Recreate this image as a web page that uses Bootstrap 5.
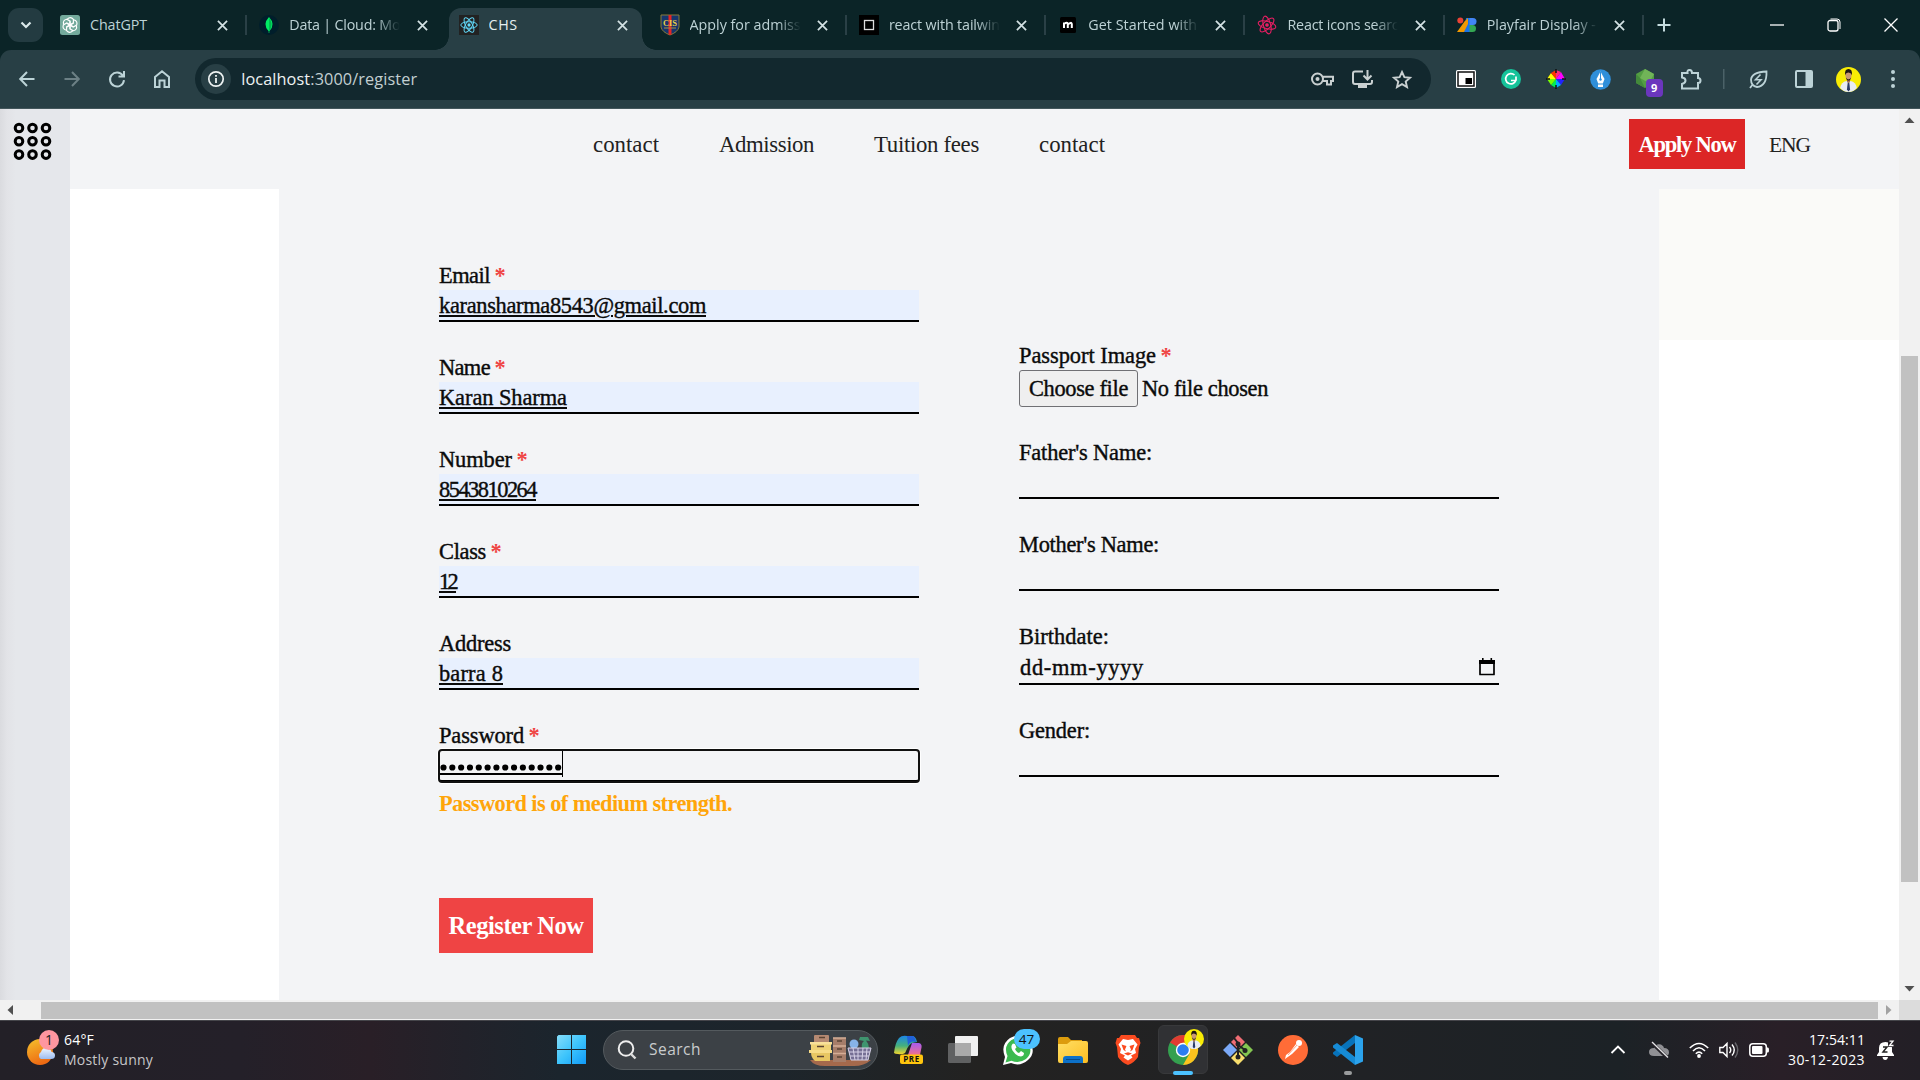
<!DOCTYPE html>
<html lang="en">
<head>
<meta charset="utf-8">
<title>CHS</title>
<link href="https://cdn.jsdelivr.net/npm/bootstrap@5.3.0/dist/css/bootstrap.min.css" rel="stylesheet">
<style>
body{width:1920px;height:1080px;overflow:hidden;font-family:"Open Sans","Noto Sans",sans-serif;background:#f3f4f6}
svg{display:block;flex:none;overflow:visible}
[data-w]{display:inline-block;white-space:nowrap}
/* browser chrome */
.tabstrip{height:50px;background:#0b2427;padding-left:8px}
.tab-search{width:35px;height:34px;border-radius:11px;background:#233b41;margin-right:7px}
.btab{width:199.3px;height:42px;margin-top:8px;padding:0 21px 0 10px;color:#bdd2d5;font-size:14.3px;position:relative}
.btab svg.fav{width:20px;height:20px}
.btab .ttl{width:112px;margin-left:10px;overflow:hidden;white-space:nowrap;line-height:34px;height:34px}
.btab .fade-end{-webkit-mask-image:linear-gradient(90deg,#000 78%,transparent 99%);mask-image:linear-gradient(90deg,#000 78%,transparent 99%)}
.btab .row-in{height:34px}
.btab.sep::after{content:"";position:absolute;right:2px;top:7px;width:2px;height:20px;background:#2a4046}
.btab.on{width:193px;padding-right:14px;background:#283f45;border-radius:12px 12px 0 0;color:#e6eff0}
.btab.after-on{margin-left:8px}
.btab.on::before,.btab.on .curve{content:"";position:absolute;bottom:0;width:14px;height:14px}
.btab.on::before{left:-14px;background:radial-gradient(circle at 0 0,transparent 13.5px,#283f45 14px)}
.btab.on .curve{right:-14px;background:radial-gradient(circle at 100% 0,transparent 13.5px,#283f45 14px)}
.plus{margin:-1px 0 0 11px}
.winctl{margin-right:1px}
.winctl>div{width:57px;height:42px}
.toolbar-bg{height:59px;background:#0b2427}
.tools{height:59px;background:#283f45;border-radius:11px 11px 0 0;border-bottom:1px solid #43565b;padding-left:5px}
.slot{width:44.8px;height:44px;display:flex;align-items:center;justify-content:center;flex:none;position:relative}
.slot-sm{width:40px}
.slot-bar{width:24px}
.exts{margin-left:12.500px}
.omni{width:1236px;height:42px;border-radius:21px;background:#12282e;margin-left:11px;padding-left:6px;padding-right:9px}
.info-dot{width:30px;height:30px;border-radius:50%;background:#283f45}
.url{font-size:16.3px;color:#eef2f2;margin-left:10px}
.url b{font-weight:400;color:#c3cfd1}
.nine{right:5px;top:22px;width:17px;height:18px;border-radius:4px;background:#6b36bd;color:#fff;font-size:11px;font-weight:700;line-height:18px;text-align:center}
/* page */
.serif{font-family:"Liberation Serif",serif}
.viewport-area{height:891px}
.side{width:70px;background:linear-gradient(90deg,#dadbdf 0,#e2e3e7 7px,#e5e7eb 16px);padding:13px 0 0 13px}
.page-area{width:1829px}
.topnav{height:80px;background:#f3f4f6;padding-left:523px;padding-top:10px}
.topnav .link-item{font-size:22.8px;line-height:52px;color:#222;margin-right:60px;height:50px}
.apply-btn{width:116px;height:50px;background:#dc2626;color:#fff;font-size:22.5px;line-height:52px;text-align:center;font-weight:700;margin-left:524px}
.lang{margin-left:24px;font-size:21.5px;line-height:52px;color:#222}
.gutter-l{width:209px;background:#fff}
.gutter-r{width:240px;background:#fff}
.gutter-r div{height:151px;background:#fafaf8}
.formpane{width:1380px;background:#f3f4f6;padding-left:160px;color:#0b0b0b;font-size:22.4px;-webkit-text-stroke:.4px #0b0b0b}
.col-form{width:480px}
.col-main{padding-top:71px}
.col-extra{margin-left:100px;padding-top:151px}
.fld{margin-bottom:30px}
.fld.upload{margin-bottom:29px}
.lbl{height:30px;line-height:32px}
.lbl i{font-style:normal;font-weight:700;color:#ef4444;-webkit-text-stroke:0;margin-left:-1px}
.inp{height:32px;border-bottom:2px solid #000;line-height:31px}
.filled{background:#e8f0fe}
.filled span{height:30px;text-decoration:underline;text-decoration-thickness:2px;text-underline-offset:2px}
.pw{border-radius:3px;outline:2px solid #101010;outline-offset:-1px;box-shadow:0 0 0 2px #fff}
.pw .dots-in{width:123px;height:27px;border-right:1px solid #000;margin-left:1px}
.pw .dots-in div{width:122px;height:25px;border-bottom:2px solid #000}
.datebox{height:34px;padding:0 4px 0 1px}
.strength{color:#ffa50a;font-weight:700;-webkit-text-stroke:0;line-height:30px;margin-top:7px;height:31px}
.reg-btn{width:154px;height:55px;background:#ef4444;color:#fff;-webkit-text-stroke:0;font-weight:700;font-size:24.5px;line-height:55px;text-align:center;margin-top:78px}
.choose{width:119px;height:37px;border:1px solid #707074;border-radius:3px;background:#efefef;line-height:36px;padding-left:9px}
.nofile{line-height:38px;margin-left:4px}
.vbar{width:21px;background:#f1f1f1}
.vthumb{width:17px;height:526px;margin:226px 0 0 2px;background:#c1c1c1}
.hbar{height:20px;background:#f1f1f1}
.hthumb{width:1837px;height:17px;background:#c1c1c1}
.corner{background:#dcdcdc}
/* taskbar */
.taskbar{height:60px;padding-bottom:2px;border-top:1px solid #45454a;color:#fff;background:linear-gradient(90deg,#232027 0,#242029 240px,#291f27 370px,#1b252d 560px,#1d252b 780px,#232221 980px,#202225 1360px,#1c2226 1620px,#291f27 1780px,#231f26 1920px)}
.wx{width:557px;padding-left:27px;font-size:14px;line-height:20px}
.wx .sub{color:#c7c6c9}
.start{width:30px;margin-right:16px}
.searchbox{width:275px;height:40px;border-radius:20px;background:#3c4146;border:1px solid #545a5e;padding-left:13px;padding-right:5px;color:#c9cccd;font-size:15.5px}
.searchbox span{margin-left:12px}
.apps{margin-left:2.500px}
.tslot{width:55px;height:50px;display:flex;align-items:center;justify-content:center;position:relative;flex:none}
.tslot.act::before{content:"";position:absolute;left:2.5px;top:0;width:50px;height:49px;border-radius:6px;background:#303134;border:1px solid #38393b}
.tslot svg{position:relative}
.tslot .mini{position:absolute;left:28.500px;top:4px}
.b47{left:23px;top:4px;width:26px;height:20px;border-radius:10px;background:#4cc2ff;color:#111;font-size:13.5px;line-height:20px;text-align:center}
.ul-on{left:17.5px;bottom:0;width:20px;height:4px;border-radius:2px;background:#4cc2ff}
.ul-dot{left:23.5px;bottom:0;width:8px;height:4px;border-radius:2px;background:#9a9c9d}
.tray{margin-right:25px}
.clock{font-size:14px;line-height:20px;width:86px;margin:0 12px 0 9px}
</style>
<script src="https://cdn.jsdelivr.net/npm/bootstrap@5.3.0/dist/js/bootstrap.bundle.min.js"></script>
</head>
<body>
<svg width="0" height="0" class="position-absolute"><defs>
<symbol id="x" viewBox="0 0 12 12"><path d="M1 1L11 11M11 1L1 11" stroke="#d3e1e3" stroke-width="1.9" fill="none"/></symbol>
<symbol id="face" viewBox="0 0 24 24"><circle cx="12" cy="12" r="12" fill="#f8ec04"/><path d="M4 20Q5 14.500 10 13.500h4Q19 14.500 20 20Q17 24 12 24T4 20Z" fill="#e8ecf4"/><path d="M11.300 14.500h1.400l.8 7-1.500 2-1.500-2Z" fill="#2a3b66"/><path d="M10.500 11h3v3L12 15.500 10.500 14Z" fill="#a87552"/><ellipse cx="12" cy="8" rx="2.900" ry="4.200" fill="#c99872"/><path d="M8.800 8Q8 2 12 2T15.200 8Q14.500 5.500 12 5.300T8.800 8ZM9.500 10Q12 14 14.500 10Q14 13 12 13T9.500 10Z" fill="#1d1512"/></symbol>
<symbol id="react" viewBox="-11 -11 22 22"><circle r="2"/><g fill="none" stroke="currentColor" stroke-width="1.2"><ellipse rx="10" ry="4"/><ellipse rx="10" ry="4" transform="rotate(60)"/><ellipse rx="10" ry="4" transform="rotate(120)"/></g></symbol>
<linearGradient id="win" x1="0" y1="0" x2="1" y2="1"><stop offset="0" stop-color="#86defa"/><stop offset=".5" stop-color="#3dc4fc"/><stop offset="1" stop-color="#109af8"/></linearGradient>
<linearGradient id="sun" x1="0" y1="0" x2=".4" y2="1"><stop offset="0" stop-color="#f5c22c"/><stop offset="1" stop-color="#ee6a13"/></linearGradient>
<linearGradient id="cl" x1="0" y1="0" x2="0" y2="1"><stop offset="0" stop-color="#eef5ff"/><stop offset="1" stop-color="#9dbcf0"/></linearGradient>
<linearGradient id="fo" x1="0" y1="0" x2="1" y2="1"><stop offset="0" stop-color="#ffdf64"/><stop offset="1" stop-color="#fcbd22"/></linearGradient>
<linearGradient id="co" x1="0" y1="0" x2="0" y2="1"><stop offset="0" stop-color="#1c86e8"/><stop offset=".55" stop-color="#45b17c"/><stop offset="1" stop-color="#f3d52c"/></linearGradient>
<linearGradient id="co2" x1="0" y1="0" x2="0" y2="1"><stop offset="0" stop-color="#a65bef"/><stop offset="1" stop-color="#f0718e"/></linearGradient>
</defs></svg>

<!-- tab strip -->
<header class="tabstrip d-flex">
  <div class="tab-search d-flex align-items-center justify-content-center mt-2"><svg width="12" height="8" viewBox="0 0 12 8"><path d="M1.500 1.500L6 6L10.500 1.500" stroke="#dbe9ea" stroke-width="2.200" fill="none"/></svg></div>
  <div class="btab sep"><div class="row-in d-flex align-items-center">
    <svg class="fav" viewBox="0 0 20 20"><rect width="20" height="20" rx="2.500" fill="#74aa9c"/><g fill="none" stroke="#fff" stroke-width="1.150"><path id="kn" d="M7.300 4.200Q10.500 1 13.400 4.300V8.200L10 10.200L6.700 8.300"/><use href="#kn" transform="rotate(60 10 10)"/><use href="#kn" transform="rotate(120 10 10)"/><use href="#kn" transform="rotate(180 10 10)"/><use href="#kn" transform="rotate(240 10 10)"/><use href="#kn" transform="rotate(300 10 10)"/></g></svg>
    <div class="ttl"><span data-w="57">ChatGPT</span></div><svg class="ms-auto" width="11" height="11"><use href="#x"/></svg></div></div>
  <div class="btab"><div class="row-in d-flex align-items-center">
    <svg class="fav" viewBox="0 0 20 20"><circle cx="10" cy="10" r="10" fill="#001e2b"/><path d="M10 2Q17 9.500 10.300 16.200V18H9.700V16.200Q3 9.500 10 2Z" fill="#00ed64"/><path d="M10.200 3V16Q15 9 10.200 3Z" fill="#00b450"/></svg>
    <div class="ttl fade-end"><span data-w="111">Data | Cloud: Mo</span></div><svg class="ms-auto" width="11" height="11"><use href="#x"/></svg></div></div>
  <div class="btab on"><span class="curve"></span><div class="row-in d-flex align-items-center">
    <svg class="fav" viewBox="0 0 20 20"><rect width="20" height="20" fill="#222"/><use href="#react" x="1" y="1" width="18" height="18" style="color:#61dafb" fill="#61dafb"/></svg>
    <div class="ttl"><span data-w="29">CHS</span></div><svg class="ms-auto" width="11" height="11"><use href="#x"/></svg></div></div>
  <div class="btab sep after-on"><div class="row-in d-flex align-items-center">
    <svg class="fav" viewBox="0 0 20 20"><path d="M1 0H19V12Q18 17 10 20Q2 17 1 12Z" fill="#16366d" stroke="#887a3b"/><path d="M8.500 0h3V19.500l-1.500.5-1.500-.5Z" fill="#e62524"/><text x="10" y="11" text-anchor="middle" font-family="Liberation Serif" font-weight="700" font-size="8.500" fill="#e6ce49">CIS</text><path d="M4 13H16" stroke="#ab8d44"/></svg>
    <div class="ttl fade-end"><span data-w="111">Apply for admiss</span></div><svg class="ms-auto" width="11" height="11"><use href="#x"/></svg></div></div>
  <div class="btab sep"><div class="row-in d-flex align-items-center">
    <svg class="fav" viewBox="0 0 20 20"><rect width="20" height="20" fill="#000"/><rect x="5.500" y="5.500" width="9" height="9" fill="none" stroke="#ddd" stroke-width="1.300"/></svg>
    <div class="ttl fade-end"><span data-w="111">react with tailwin</span></div><svg class="ms-auto" width="11" height="11"><use href="#x"/></svg></div></div>
  <div class="btab sep"><div class="row-in d-flex align-items-center">
    <svg class="fav" viewBox="0 0 20 20"><rect x="2" y="2" width="16" height="16" rx="1.500" fill="#000"/><path d="M6 13V7.500M6 9Q9.500 6.500 9.800 9V13M9.800 9.500Q13.500 6.500 13.800 9V13" stroke="#fff" stroke-width="2" fill="none"/></svg>
    <div class="ttl fade-end"><span data-w="109">Get Started with</span></div><svg class="ms-auto" width="11" height="11"><use href="#x"/></svg></div></div>
  <div class="btab sep"><div class="row-in d-flex align-items-center">
    <svg class="fav" viewBox="0 0 20 20"><use href="#react" width="20" height="20" style="color:#e91e63" fill="#e91e63" transform="rotate(15 10 10)"/></svg>
    <div class="ttl fade-end"><span data-w="111">React icons searc</span></div><svg class="ms-auto" width="11" height="11"><use href="#x"/></svg></div></div>
  <div class="btab sep"><div class="row-in d-flex align-items-center">
    <svg class="fav" viewBox="0 0 20 20"><path d="M9 3h4v14H7Z" fill="#1a73e8"/><path d="M7.500 6.500L11 3V9L7 17H0Z" fill="#f29900"/><circle cx="3.300" cy="5.500" r="3" fill="#ea4335"/><path d="M12.500 3h3.500a3.500 3.500 0 0 1 0 7H12.500Z" fill="#4285f4"/><path d="M12.500 10h3a3.500 3.500 0 0 1 0 7H12.500Z" fill="#34a853"/></svg>
    <div class="ttl fade-end"><span data-w="109">Playfair Display -</span></div><svg class="ms-auto" width="11" height="11"><use href="#x"/></svg></div></div>
  <svg class="plus align-self-center" width="14" height="14"><path d="M7 0.500V13.500M.5 7H13.500" stroke="#c5dcdf" stroke-width="2"/></svg>
  <div class="winctl d-flex ms-auto mt-1">
    <div class="d-flex align-items-center justify-content-center"><svg width="14" height="2"><path d="M0 1H14" stroke="#fff" stroke-width="1.300"/></svg></div>
    <div class="d-flex align-items-center justify-content-center"><svg width="14" height="14"><rect x="1" y="2.500" width="10" height="10.500" rx="2" fill="none" stroke="#fff" stroke-width="1.300"/><path d="M3.500 1H10Q13 1 13 4V11" fill="none" stroke="#fff"/></svg></div>
    <div class="d-flex align-items-center justify-content-center"><svg width="14" height="14"><path d="M.5 .5L13.500 13.500M13.500 .5L.5 13.500" stroke="#fff" stroke-width="1.300"/></svg></div>
  </div>
</header>

<!-- toolbar -->
<div class="toolbar-bg"><div class="tools d-flex align-items-center">
  <div class="slot"><svg width="16" height="16"><path d="M15.500 8H1.500M8 1L1.200 8L8 15" stroke="#bcd3d7" stroke-width="2" fill="none"/></svg></div>
  <div class="slot"><svg width="16" height="16"><path d="M.5 8H14.500M8 1L14.800 8L8 15" stroke="#6c8085" stroke-width="2" fill="none"/></svg></div>
  <div class="slot"><svg width="16" height="16"><path d="M13.800 4.500A7 7 0 1 0 15 9.200M15 0V5.500H9.500" stroke="#bcd3d7" stroke-width="2" fill="none"/></svg></div>
  <div class="slot"><svg width="16" height="18"><path d="M1 7L8 1.300L15 7V17H10.500V10.500H5.500V17H1Z" stroke="#bcd3d7" stroke-width="2" fill="none"/></svg></div>
  <div class="omni d-flex align-items-center">
    <div class="info-dot d-flex align-items-center justify-content-center"><svg width="16" height="16"><circle cx="8" cy="8" r="7.200" fill="none" stroke="#eef3f3" stroke-width="1.700"/><path d="M8 7V12M8 4V5.700" stroke="#eef3f3" stroke-width="1.800"/></svg></div>
    <span class="url"><span data-w="176">localhost<b>:3000/register</b></span></span>
    <div class="d-flex ms-auto">
      <div class="slot slot-sm"><svg width="23" height="14"><g fill="none" stroke="#c9d0d1" stroke-width="2"><circle cx="6.500" cy="7" r="5.500"/><path d="M11.500 4.800H22V9H20V12.500H16V9H11.500"/></g><circle cx="6.500" cy="7" r="2" fill="#c9d0d1"/></svg></div>
      <div class="slot slot-sm"><svg width="21" height="19"><path d="M11 1.500H3Q1 1.500 1 3.500V12Q1 14 3 14H18Q20 14 20 12V10" fill="none" stroke="#c9d0d1" stroke-width="2"/><path d="M6 14h9v4H6Z" fill="#c9d0d1"/><path d="M15.500 0V9M11.500 5.500L15.500 9.500L19.500 5.500" stroke="#c9d0d1" stroke-width="2" fill="none"/></svg></div>
      <div class="slot slot-sm"><svg width="20" height="19" viewBox="0 0 20 19"><path d="M10 2L12.400 7.200L18 7.700L13.700 11.500L15 17L10 14.100L5 17L6.300 11.500L2 7.700L7.600 7.200Z" fill="none" stroke="#c9d0d1" stroke-width="1.900"/></svg></div>
    </div>
  </div>
  <div class="exts d-flex">
    <div class="slot"><svg width="20" height="18"><rect width="20" height="18" rx="1.500" fill="#fff"/><rect x="2" y="2" width="16" height="14" fill="none" stroke="#111" stroke-width="1.500"/><rect x="9.500" y="8" width="6.500" height="6" fill="#000"/></svg></div>
    <div class="slot"><svg width="20" height="20"><circle cx="10" cy="10" r="10" fill="#15c39a"/><path d="M13.500 6A5.200 5.200 0 1 0 14.800 11.500H10M15 7.500V11.500" fill="none" stroke="#fff" stroke-width="1.700"/></svg></div>
    <div class="slot"><svg width="20" height="20" viewBox="-10 -10 20 20"><path d="M0 0V-9L5-7Z" fill="#ff2a7a"/><path d="M0 0L5-7L9 0Z" fill="#f0f"/><path d="M0 0H9L5 6Z" fill="#22f"/><path d="M0 0L5 6L0 9Z" fill="#0af"/><path d="M0 0V9L-5 6Z" fill="#0e5"/><path d="M0 0L-5 6L-9 0Z" fill="#7f0"/><path d="M0 0H-9L-5-6Z" fill="#ff0"/><path d="M0 0L-5-6L0-9Z" fill="#f30"/><path d="M0-10V-6M0 6V10M-10 0H-6M6 0H10" stroke="#111" stroke-width="1.500"/></svg></div>
    <div class="slot"><svg width="21" height="21"><circle cx="10.500" cy="10.500" r="10.300" fill="#2f8fda"/><path d="M10.500 2.500L14.500 10L12.800 14.500H8.200L6.500 10Z" fill="#fff"/><path d="M8 15.500H13V18H8Z" fill="#fff"/><path d="M10.500 3V10" stroke="#2f8fda"/><circle cx="10.500" cy="10.500" r="1.200" fill="#2f8fda"/></svg></div>
    <div class="slot"><svg width="20" height="20"><path d="M10 0L19 5V14L10 19L1 14V5Z" fill="#539e43"/><path d="M10 0L19 5L14 14L5 9Z" fill="#71b458"/><path d="M1 5L5 9L10 19L1 14Z" fill="#438a3b"/></svg><span class="nine position-absolute">9</span></div>
    <div class="slot"><svg width="21" height="21"><path d="M2 4H7.500Q7 1 9.500 1T12 4H18V9Q20.500 9 20.500 11.500T18 14V19.500H2V15Q5.500 14 5.500 11.500T2 8.500Z" fill="none" stroke="#bcd3d7" stroke-width="2"/></svg></div>
    <div class="slot slot-bar"><svg width="2" height="20"><rect width="1.500" height="20" fill="#4b6268"/></svg></div>
    <div class="slot"><svg width="19" height="19"><path d="M17.500 1.500Q18 16 8 17Q2 16 2 9.500Q3 2 17.500 1.500ZM4 14L1 18" fill="none" stroke="#bcd3d7" stroke-width="1.800"/><path d="M11.500 4.500L6.500 9.800H12L7.500 14.500" fill="none" stroke="#bcd3d7" stroke-width="1.600"/></svg></div>
    <div class="slot"><svg width="18" height="18"><rect x="1" y="1" width="16" height="16" rx="1" fill="none" stroke="#bcd3d7" stroke-width="2"/><rect x="10.500" y="1" width="6.500" height="16" fill="#bcd3d7"/></svg></div>
    <div class="slot"><svg width="25" height="25"><use href="#face"/></svg></div>
    <div class="slot"><svg width="4" height="18" fill="#bcd3d7"><circle cx="2" cy="2" r="2"/><circle cx="2" cy="9" r="2"/><circle cx="2" cy="16" r="2"/></svg></div>
  </div>
</div></div>

<!-- page -->
<main class="viewport-area d-flex">
  <aside class="side"><svg width="40" height="40" fill="none" stroke="#000" stroke-width="3"><g id="dr"><circle cx="6" cy="6" r="3.800"/><circle cx="19.500" cy="6" r="3.800"/><circle cx="33" cy="6" r="3.800"/></g><use href="#dr" y="13.300"/><use href="#dr" y="26.600"/></svg></aside>
  <div class="page-area d-flex flex-column serif">
    <nav class="topnav d-flex">
      <span class="link-item" data-w="66">contact</span><span class="link-item" data-w="95">Admission</span><span class="link-item" data-w="105">Tuition fees</span><span class="link-item me-0" data-w="66">contact</span>
      <div class="apply-btn"><span data-w="97">Apply Now</span></div>
      <span class="lang"><span data-w="41">ENG</span></span>
    </nav>
    <div class="d-flex flex-grow-1">
      <div class="gutter-l"></div>
      <div class="formpane d-flex">
        <section class="col-form col-main">
          <div class="fld"><div class="lbl"><span data-w="51">Email</span> <i>*</i></div><div class="inp filled"><span data-w="267">karansharma8543@gmail.com</span></div></div>
          <div class="fld"><div class="lbl"><span data-w="51">Name</span> <i>*</i></div><div class="inp filled"><span data-w="128">Karan Sharma</span></div></div>
          <div class="fld"><div class="lbl"><span data-w="73">Number</span> <i>*</i></div><div class="inp filled"><span data-w="97">8543810264</span></div></div>
          <div class="fld"><div class="lbl"><span data-w="47">Class</span> <i>*</i></div><div class="inp filled"><span data-w="17">12</span></div></div>
          <div class="fld"><div class="lbl"><span data-w="72">Address</span></div><div class="inp filled"><span data-w="64">barra 8</span></div></div>
          <div><div class="lbl"><span data-w="85">Password</span> <i>*</i></div>
            <div class="inp pw"><div class="dots-in"><div><svg width="122" height="25"><path d="M3.500 17.500H120" stroke="#000" stroke-width="6.200" stroke-linecap="round" stroke-dasharray="0 8.820"/></svg></div></div></div></div>
          <div class="strength"><span data-w="293">Password is of medium strength.</span></div>
          <div class="reg-btn"><span data-w="135">Register Now</span></div>
        </section>
        <section class="col-form col-extra">
          <div class="fld upload"><div class="lbl"><span data-w="137">Passport Image</span> <i>*</i></div>
            <div class="d-flex"><div class="choose"><span data-w="99">Choose file</span></div><span class="nofile" data-w="126">No file chosen</span></div></div>
          <div class="fld"><div class="lbl"><span data-w="133">Father's Name:</span></div><div class="inp"></div></div>
          <div class="fld"><div class="lbl"><span data-w="140">Mother's Name:</span></div><div class="inp"></div></div>
          <div class="fld"><div class="lbl"><span data-w="90">Birthdate:</span></div><div class="inp datebox d-flex align-items-center"><span data-w="124">dd-mm-yyyy</span><svg class="ms-auto" width="16" height="18"><path d="M1 3.500H15V16.500H1Z" fill="none" stroke="#000" stroke-width="1.700" stroke-linejoin="round"/><path d="M0 2H16V6H0ZM3 0h1.600v3H3ZM11.500 0h1.600v3h-1.600Z" fill="#000"/></svg></div></div>
          <div class="fld"><div class="lbl"><span data-w="71">Gender:</span></div><div class="inp"></div></div>
        </section>
      </div>
      <div class="gutter-r"><div></div></div>
    </div>
  </div>
  <div class="vbar d-flex flex-column">
    <svg width="21" height="21"><path d="M5.500 14L10.500 8.500L15.500 14Z" fill="#505050"/></svg>
    <div class="vthumb"></div>
    <svg class="mt-auto" width="21" height="21"><path d="M5.500 7L10.500 12.500L15.500 7Z" fill="#505050"/></svg>
  </div>
</main>
<div class="hbar d-flex align-items-center">
  <svg width="41" height="20"><path d="M13 5V15L7.500 10Z" fill="#505050"/></svg><div class="hthumb"></div><svg width="21" height="20"><path d="M8 5V15L13.500 10Z" fill="#a3a3a3"/></svg><div class="corner h-100 flex-grow-1"></div>
</div>

<!-- taskbar -->
<footer class="taskbar d-flex align-items-center">
  <div class="wx d-flex align-items-center">
    <svg width="37" height="40"><circle cx="13" cy="22" r="13" fill="url(#sun)"/><path d="M14 29a4 4 0 0 1 0-7Q16 16 21 19Q24 19 24.500 22Q28 22 28 25.500T24 29Z" fill="url(#cl)"/><circle cx="22" cy="10" r="10" fill="#ff96a0"/><text x="22" y="15" font-size="14" text-anchor="middle" fill="#222">1</text></svg>
    <div><div><span data-w="30">64°F</span></div><div class="sub"><span data-w="89">Mostly sunny</span></div></div>
  </div>
  <div class="start"><svg width="29" height="29" fill="url(#win)"><path d="M1.500 0H14V14H0V1.500ZM15 0H29V14H15ZM0 15H14V29H0ZM15 15H29V29H15Z"/></svg></div>
  <div class="searchbox d-flex align-items-center">
    <svg width="20" height="20"><circle cx="9" cy="8.500" r="7.300" fill="none" stroke="#eee" stroke-width="2"/><path d="M14 14L18.500 18.500" stroke="#ddd" stroke-width="2.400"/></svg>
    <span data-w="52">Search</span>
    <svg class="ms-auto" width="63" height="32"><path d="M1 26H62Q55 32 45 32H16Q5 32 1 26Z" fill="#a5694c"/><rect x="5" y="1" width="15" height="8" rx="1" fill="#b48972"/><rect x="2" y="9" width="20" height="7" fill="#efd276"/><rect x="1" y="8" width="22" height="2.500" fill="#f8e09a"/><path d="M2 18H21V27H6Q2 24 2 18Z" fill="#e8c763"/><rect y="16" width="23" height="3" fill="#f7dc87"/><rect x="24" y="4" width="13" height="24" fill="#a67d69"/><path d="M24 4H37M24 12H37M24 19.500H37" stroke="#d5ae96" stroke-width="1.500"/><path d="M28 7h5M28 15h5M28 23h5M8 12.500h7M8 22.500h7M10 3.500h6" stroke="#5b4434" stroke-width="1.500"/><circle cx="45" cy="10" r="4.500" fill="#87b2e7"/><path d="M53 14Q52 9 55 7L50 6L51 3H59L61 7L57 6.500Q60 10 60 14Z" fill="#3f946f"/><path d="M39 14H62L59 26H42Z" fill="#756f94"/><path d="M39 14H62L59 26H42ZM44 14L46 26M49 14V26M54 14L53 26M58 14L57 26M40 18H61M41 22H60" fill="none" stroke="#d7d2e7"/></svg>
  </div>
  <div class="apps d-flex">
    <div class="tslot"><svg width="30" height="30"><path d="M1 18Q2 8 6 3Q9 0 14 1H20Q23 2 24 7L19 8Q16 9 13 16Q12 20 5 19Q2 19 1 18Z" fill="url(#co)"/><path d="M14 1H20Q22 2 23 7Q17 5 15 11Z" fill="#2061d8"/><path d="M19 8H26Q30 9 28 15L27 20H15Z" fill="url(#co2)"/><rect x="7" y="19.500" width="23" height="9.500" rx="2" fill="#ffc50e"/><text x="18.500" y="27.300" font-size="8" font-weight="700" text-anchor="middle" fill="#111" letter-spacing=".6">PRE</text></svg></div>
    <div class="tslot"><svg width="30" height="29"><rect y="8" width="23" height="20" rx="1.500" fill="#606162"/><rect x="7" y="1" width="23" height="20" rx="1" fill="#f0f0f0"/><rect x="7" y="8" width="16" height="13" fill="#aaa"/></svg></div>
    <div class="tslot"><svg width="30" height="30"><path d="M0 30L2 22Q-3 10 7 3Q18-3 26 6Q34 17 25 25Q17 32 8 28Z" fill="#fff"/><path d="M2.500 27.500L4.500 21Q0 11 8.500 5Q17 0 24.500 7.500Q31 17 23 24Q16 29 8.500 25.700Z" fill="#3bba4f"/><path d="M10 8.500Q7 11 9.500 15.500Q13 21 18 21.500Q21 21 21 18L18 16L16 18Q13 17 12 14L13.500 12.500L12 9Z" fill="#fff"/></svg><span class="b47 position-absolute">47</span></div>
    <div class="tslot"><svg width="30" height="28"><path d="M0 3Q0 1 2 1H10L13 4H24V12H0Z" fill="#dc9c0d"/><path d="M0 8H9L13 5H28Q30 5 30 7V25Q30 27 28 27H2Q0 27 0 25Z" fill="url(#fo)"/><path d="M5 27V23Q5 20 8 20H22Q25 20 25 23V27Z" fill="#0d71c8"/><path d="M8 23.500H22" stroke="#064b8b"/></svg></div>
    <div class="tslot"><svg width="26" height="30"><path d="M6 0H20L22 3H24L25.500 8L24 12L23 22Q20 27 13 30Q6 27 3 22L2 12L.5 8L2 3H4Z" fill="#fb4b20"/><path d="M13 5L18 4L22.500 9.500L20 14L21 18L16 20.500L17.500 22.500L13 25.500L8.500 22.500L10 20.500L5 18L6 14L3.500 9.500L8 4Z" fill="#fff"/><path d="M6.500 9.500L11.500 11L10 14.500L11 16.500L8.500 15ZM19.500 9.500L14.500 11L16 14.500L15 16.500L17.500 15ZM9 18.500L13 20.500L17 18.500L13 17.300Z" fill="#fb4b20"/></svg></div>
    <div class="tslot act"><svg width="30" height="30" viewBox="-15 -15 30 30"><circle r="15" fill="#34a04f"/><path d="M0 0L-13-7.500A15 15 0 0 1 13-7.500Z" fill="#e03b31"/><path d="M0-7.500H13A15 15 0 0 1 0 15L6.500 3.700Z" fill="#fcc31e"/><circle r="7.200" fill="#fff"/><circle r="5.800" fill="#2c7df0"/></svg><svg class="mini" width="20" height="20"><use href="#face"/></svg><span class="ul-on position-absolute"></span></div>
    <div class="tslot"><svg width="30" height="30"><path d="M15 0L22 7L15 14L8 7Z" fill="#f06d74"/><path d="M7 8L14 15L7 22L0 15Z" fill="#7ba9f7"/><path d="M23 8L30 15L23 22L16 15Z" fill="#84c651"/><path d="M15 16L22 23L15 30L8 23Z" fill="#f8de6d"/><path d="M11 3L15 8V23M15 10L22 15" stroke="#222" stroke-width="2" fill="none"/><g fill="#222"><circle cx="15" cy="9" r="2.500"/><circle cx="15" cy="22" r="2.500"/><circle cx="22" cy="15.500" r="2.500"/></g></svg></div>
    <div class="tslot"><svg width="30" height="30"><circle cx="15" cy="15" r="15" fill="#ff6c37"/><circle cx="21" cy="8" r="3" fill="#fff"/><path d="M18 9L21 12L14 19L7 24L8 20L12 17Z" fill="#fff"/><path d="M19 10L10 20" stroke="#ff6c37" stroke-width=".6"/></svg></div>
    <div class="tslot"><svg width="30" height="30"><path d="M22 0L30 3.500V26.500L22 30Z" fill="#2ba3ec"/><path d="M22 0V8L4 22L0 19V17.500Z" fill="#0873ba"/><path d="M22 30V22L4 8L0 10.500V12.500Z" fill="#168bd5"/></svg><span class="ul-dot position-absolute"></span></div>
  </div>
  <div class="tray d-flex align-items-center ms-auto">
    <svg class="me-4" width="14" height="9"><path d="M.5 8L7 1.500L13.500 8" fill="none" stroke="#fff" stroke-width="1.800"/></svg>
    <svg style="margin-right:20px" width="20" height="16"><path d="M5 14Q0 14 0 10Q0 6 5 6Q7 1 12 2.500Q15 4 15 6Q20 6 20 10.500Q20 14 16 14Z" fill="#909094"/><path d="M2 0L18.500 16" stroke="#242127" stroke-width="3.500"/><path d="M3 0L19 15.500" stroke="#e6e6e8" stroke-width="1.300"/></svg>
    <svg style="margin-right:10px" width="20" height="16"><g fill="none" stroke="#fff" stroke-width="1.600"><path d="M.8 6Q10-3 19.200 6M4 9Q10 2.500 16 9M6.800 11.800Q10 8.500 13.200 11.800"/></g><circle cx="10" cy="14" r="1.900" fill="#fff"/></svg>
    <svg style="margin-right:10px" width="20" height="16"><g fill="none" stroke="#fff" stroke-width="1.400"><path d="M.8 5.500H4L8 1.500V14.500L4 10.500H.8ZM10.500 5Q13 8 10.500 11M13 2.500Q17.500 8 13 13.500"/><path d="M16 .5Q21.500 8 16 15.500" stroke="#66656a"/></g></svg>
    <svg width="21" height="14"><rect x=".8" y=".8" width="16.500" height="12.400" rx="3" fill="none" stroke="#fff" stroke-width="1.500"/><rect x="3" y="3" width="10.500" height="8" rx="1" fill="#fff"/><path d="M18 4.500H19Q20 4.500 20 7T19 9.500H18Z" fill="#fff"/></svg>
    <div class="clock text-end"><div><span data-w="56">17:54:11</span></div><div><span data-w="77">30-12-2023</span></div></div>
    <svg width="18" height="20"><path d="M0 15L2 12V8Q2 2 8.500 2Q15 2 15 8V12L17 15V16H0ZM5.500 17H11Q10.500 20 8.200 20T5.500 17Z" fill="#fff"/><path d="M6 7H10L6 12H10.500" fill="none" stroke="#222" stroke-width="1.500"/><rect x="11" y="0" width="7" height="7" fill="#262127"/><path d="M12.500 1.200H16L12.500 5.500H16.500" fill="none" stroke="#fff" stroke-width="1.300"/></svg>
  </div>
</footer>
<script>
/* Track each label so that it fills the width given in data-w. */
document.querySelectorAll('[data-w]').forEach(function (el) {
  var w = el.getBoundingClientRect().width, n = el.textContent.length;
  el.style.letterSpacing = ((el.dataset.w - w) / n).toFixed(3) + 'px';
});
</script>
</body>
</html>
